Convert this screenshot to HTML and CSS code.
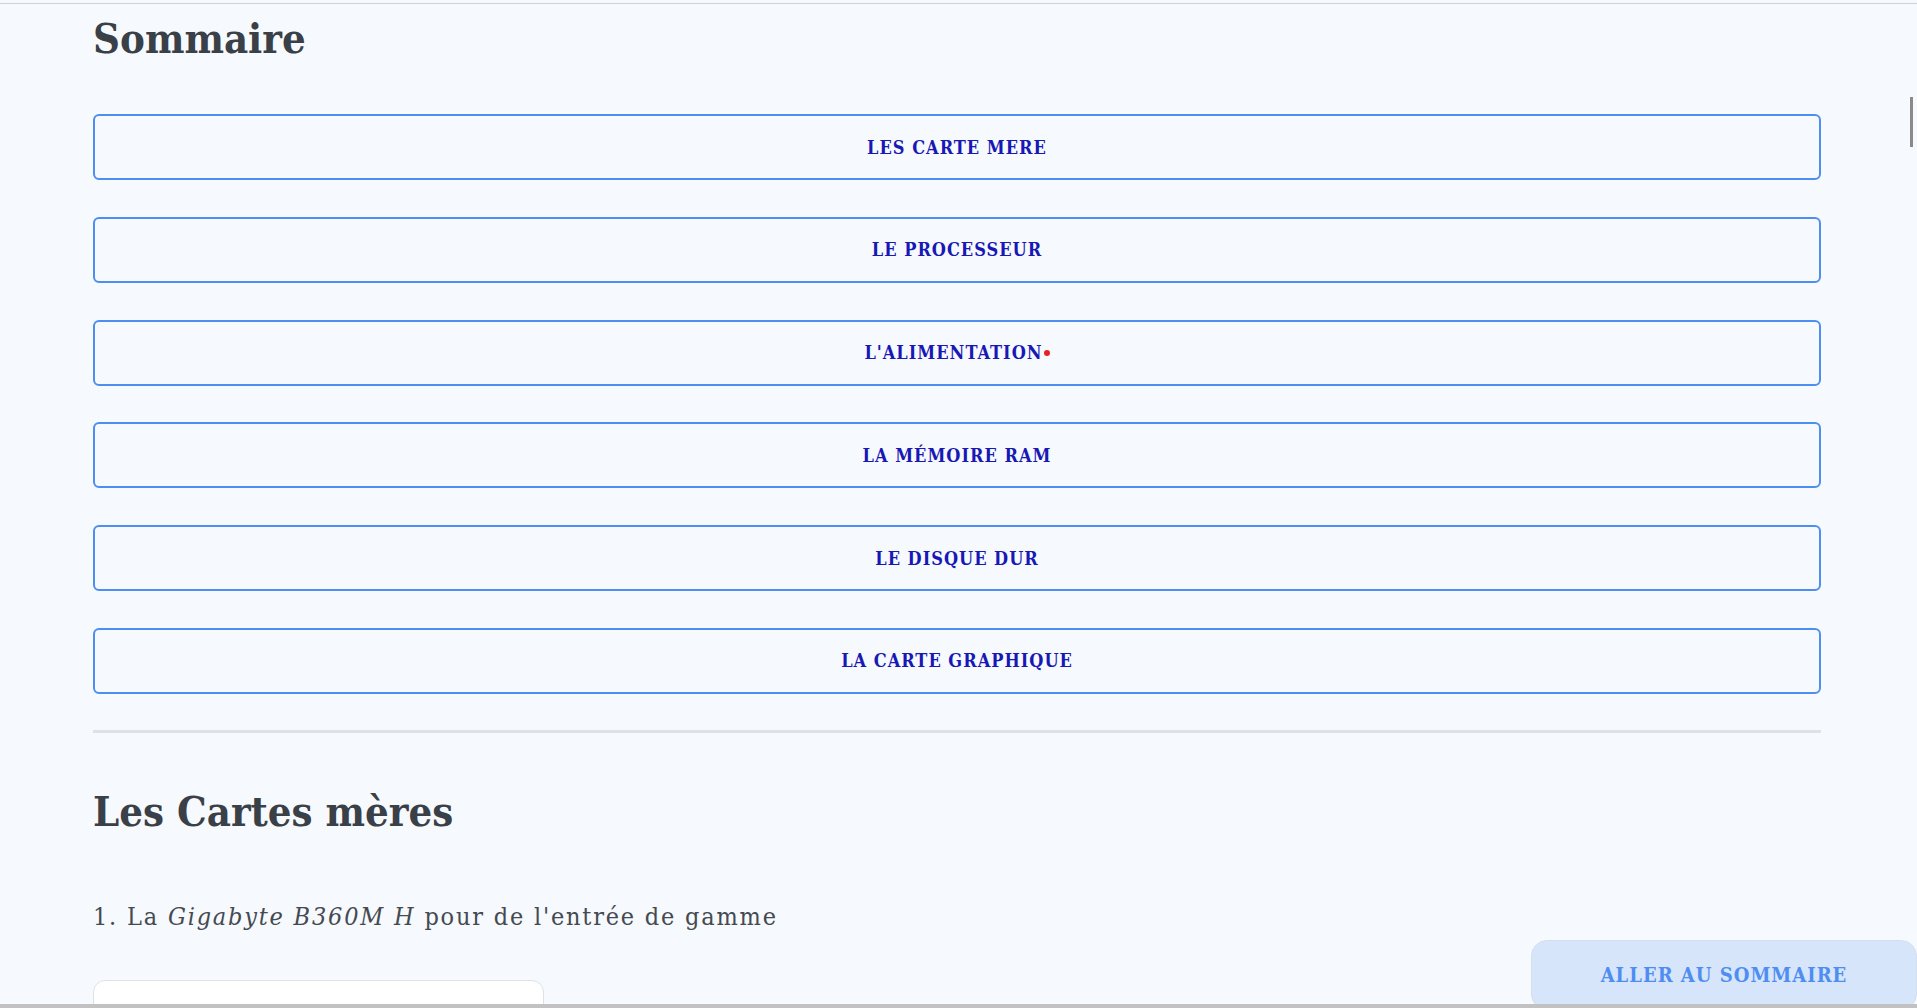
FILE: index.html
```html
<!DOCTYPE html>
<html lang="fr">
<head>
<meta charset="utf-8">
<title>Sommaire</title>
<link rel="stylesheet" href="styles.css">
</head>
<body>
<div class="frame-top"></div>
<main class="page">
  <h1 class="title">Sommaire</h1>
  <nav class="toc">
    <a class="toc-item" href="#cartes">Les carte mere</a>
    <a class="toc-item" href="#processeur">Le processeur</a>
    <a class="toc-item" href="#alimentation">L'alimentation<span class="red-dot"></span></a>
    <a class="toc-item" href="#ram">La mémoire RAM</a>
    <a class="toc-item" href="#disque">Le disque dur</a>
    <a class="toc-item" href="#graphique">La carte graphique</a>
  </nav>
  <hr class="divider">
  <h2 class="title" id="cartes">Les Cartes mères</h2>
  <p class="lead">1. La <em>Gigabyte B360M H</em> pour de l'entrée de gamme</p>
  <div class="card"></div>
</main>
<a class="to-top" href="#">Aller au sommaire</a>
<div class="scroll-thumb"></div>
<div class="frame-bottom"></div>
</body>
</html>
```
FILE: styles.css
```css
html, body {
  margin: 0;
  padding: 0;
  background: #f6f9fe;
  overflow: hidden;
}
body {
  font-family: "DejaVu Serif", "Liberation Serif", serif;
  font-stretch: condensed;
  color: #343a40;
}
.page {
  width: 1728px;
  margin: 0 0 0 93px;
  padding-top: 12px;
  display: flex;
  flex-direction: column;
}
.title {
  margin: 0;
  font-size: 41.5px;
  line-height: 53px;
  font-weight: 700;
  color: #3a4047;
}
.toc {
  margin-top: 49px;
  display: flex;
  flex-direction: column;
  gap: 36.75px;
}
.toc-item {
  box-sizing: border-box;
  height: 66px;
  display: flex;
  align-items: center;
  justify-content: center;
  border: 2px solid #4d8ef3;
  border-radius: 6px;
  text-decoration: none;
  text-transform: uppercase;
  font-weight: 700;
  font-size: 18px;
  letter-spacing: 1px;
  color: #1818b4;
}
.red-dot {
  display: inline-block;
  width: 6px;
  height: 6px;
  border-radius: 50%;
  background: #e82222;
  margin-left: 1px;
  vertical-align: -6px;
}
.divider {
  margin: 36px 0 0;
  border: 0;
  height: 3px;
  background: #dee2e6;
}
#cartes {
  margin-top: 52px;
}
.lead {
  margin: 61px 0 0;
  font-size: 25px;
  line-height: 36px;
  font-weight: 400;
  letter-spacing: 1.8px;
  color: #444a51;
}
.lead em {
  font-style: italic;
}
.card {
  margin-top: 45px;
  width: 451px;
  height: 200px;
  box-sizing: border-box;
  background: #ffffff;
  border: 1px solid #dee2e6;
  border-radius: 12px;
}
.to-top {
  position: fixed;
  left: 1531px;
  top: 940px;
  width: 386px;
  height: 70px;
  box-sizing: border-box;
  display: flex;
  align-items: center;
  justify-content: center;
  background: #d7e5fb;
  border: 1px solid #d3def0;
  border-radius: 16px;
  text-decoration: none;
  text-transform: uppercase;
  font-weight: 700;
  font-size: 20px;
  letter-spacing: 1px;
  color: #4f8ef0;
}
.frame-top {
  position: fixed;
  left: 0;
  right: 0;
  top: 3px;
  height: 1px;
  background: #d2d2d2;
}
.frame-bottom {
  position: fixed;
  left: 0;
  right: 0;
  bottom: 0;
  height: 4px;
  background: #c2c2c2;
}
.scroll-thumb {
  position: fixed;
  left: 1910px;
  top: 97px;
  width: 3px;
  height: 50px;
  background: #8a8a8a;
}
```
